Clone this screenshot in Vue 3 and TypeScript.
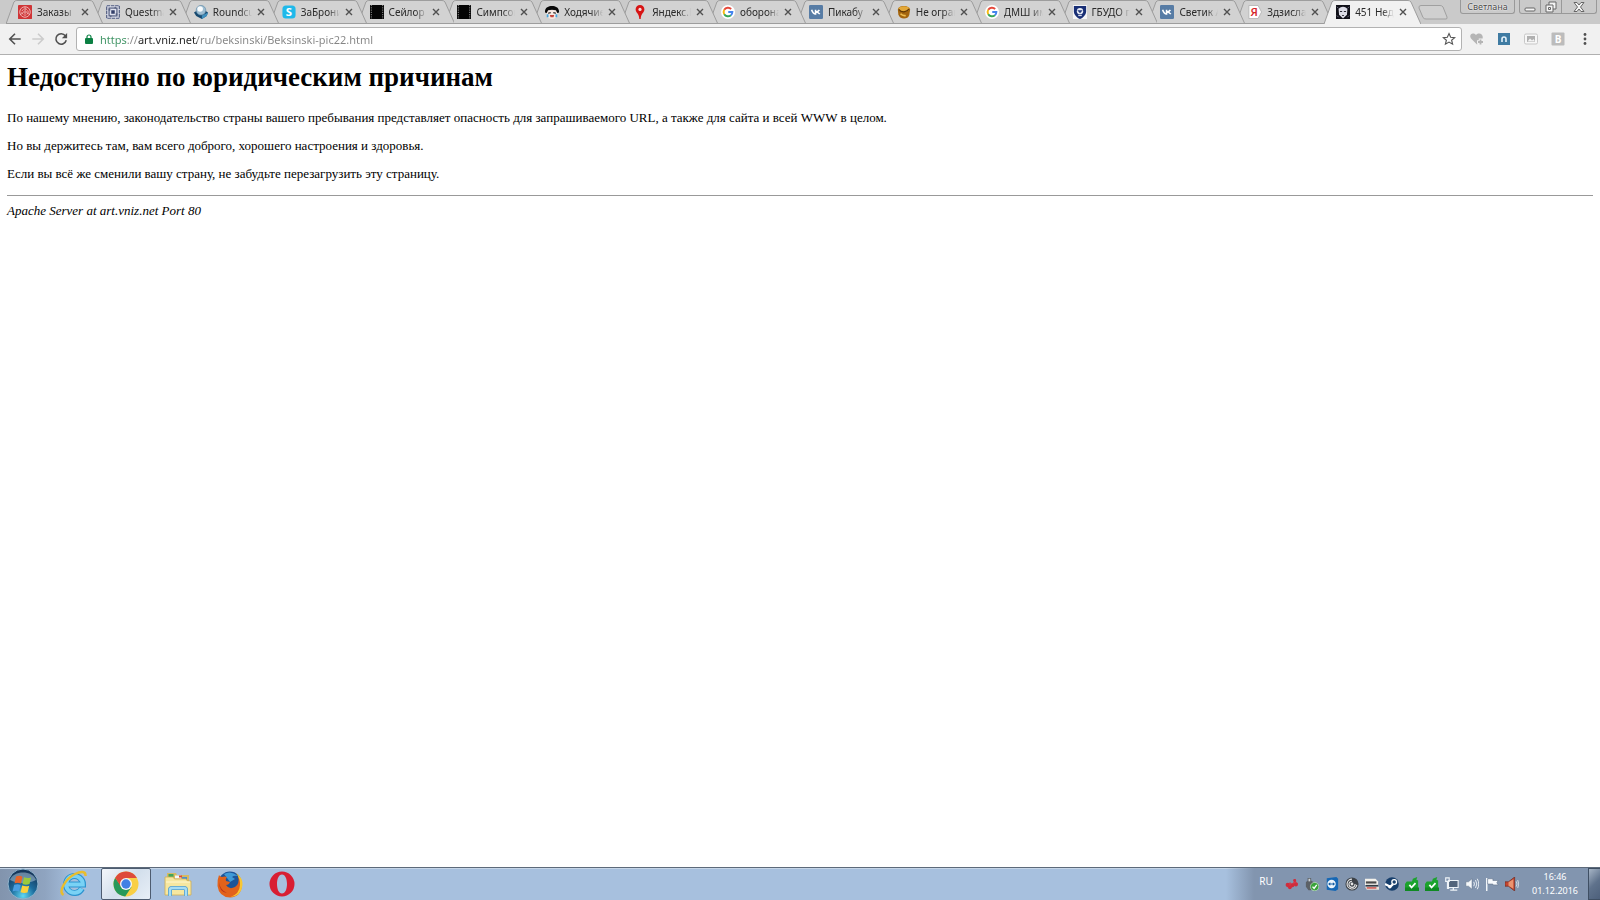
<script setup lang="ts">
import { ref } from 'vue'

interface Tab {
  title: string
  icon: string
}
interface Item {
  label: string
  icon: string
}

const tabs: Tab[] = [
  { title: 'Заказы', icon: 'orders' },
  { title: 'Questmaster', icon: 'maze' },
  { title: 'Roundcube', icon: 'cube' },
  { title: 'ЗаБронируй', icon: 'skype' },
  { title: 'Сейлор', icon: 'film' },
  { title: 'Симпсоны', icon: 'film' },
  { title: 'Ходячие', icon: 'face' },
  { title: 'Яндекс.Карты', icon: 'pin' },
  { title: 'оборона', icon: 'google' },
  { title: 'Пикабу', icon: 'vk' },
  { title: 'Не ограни', icon: 'pot' },
  { title: 'ДМШ им', icon: 'google' },
  { title: 'ГБУДО г', icon: 'shield' },
  { title: 'Светик А', icon: 'vk' },
  { title: 'Здзислав', icon: 'yandex' },
  { title: '451 Недос', icon: 'portrait' },
]
const activeTab = ref(15)
const url = ref('https://art.vniz.net/ru/beksinski/Beksinski-pic22.html')

const glyphs: Record<string, string> = {
  orders:
    '<rect width="16" height="16" rx="1" fill="#cf3436"/><g fill="none" stroke="#f3c0bf"><circle cx="8" cy="8" r="6"/><circle cx="8" cy="8" r="3.6" stroke-dasharray="3 1"/><circle cx="8" cy="8" r="1.4"/><path d="M8 2v4M2.500 11l3.500-2M13.500 11L10 9" stroke-width=".8"/></g>',
  maze:
    '<rect width="16" height="16" fill="#dfe2ee"/><g fill="none" stroke="#4b5578" stroke-width="1.300"><rect x=".8" y=".8" width="14.400" height="14.400" stroke-dasharray="4 .8"/><rect x="3.500" y="3.500" width="9" height="9"/><path d="M3 5.500h2M11 10.500h2M5.500 12v2M10.500 2v2"/></g><rect x="6" y="6" width="4" height="4" fill="#35406a"/>',
  cube:
    '<path d="M0 8.500L4 6h8l4 2.500-1.500 4L9 16l-6.500-3.500z" fill="#16496f"/><path d="M9 16l5.500-3.500L16 8.500 9 12z" fill="#3f8fbe"/><circle cx="8" cy="6" r="5.500" fill="#9dbdd2" stroke="#5a87a5" stroke-width=".7"/><circle cx="7" cy="4.500" r="3.200" fill="#f7fbfd"/>',
  skype:
    '<rect x=".5" y=".5" width="15" height="15" rx="4" fill="#1fb9ea"/><text x="8" y="13" text-anchor="middle" font-family="Open Sans, sans-serif" font-weight="700" font-size="13" fill="#fff">S</text>',
  film:
    '<rect width="16" height="16" fill="#050505"/><path d="M1.500 0v16M14.500 0v16" stroke="#a9a9a9" stroke-width="1" stroke-dasharray="1.300 1.300"/>',
  face:
    '<path d="M2 6h12v5q-1 5-6 5t-6-5z" fill="#f8e9e2"/><path d="M0 8.500C-.5 3 3.500 1 8 1s8.500 2 8 7.500l-2 .5-1.500-3q-4.500-1-9 0L2 9z" fill="#080808"/><path d="M3.500 9.500l3-.8M12.500 9.500l-3-.8" stroke="#222" stroke-width="1.300"/><path d="M5.500 11.500h5l-.8 2.500H6.300z" fill="#c4473d"/><path d="M3 10.500v3.500M13 10.500v3.500" stroke="#42a5de" stroke-width="2"/>',
  pin:
    '<path d="M8 0a5 5 0 0 0-5 5.200C3 8.800 7 9.500 7.200 16h1.600C9 9.500 13 8.800 13 5.200A5 5 0 0 0 8 0z" fill="#d71414"/><circle cx="8" cy="5" r="1.800" fill="#f6dcdc"/>',
  google:
    '<circle cx="8" cy="8" r="8" fill="#fff"/><g fill="none" stroke-width="2.200"><path d="M11.600 4.600A5 5 0 0 0 3.700 5.500" stroke="#e5473a"/><path d="M3.700 5.500a5 5 0 0 0 0 5" stroke="#f5b912"/><path d="M3.700 10.500a5 5 0 0 0 7.600 1.200" stroke="#35a556"/><path d="M11.300 11.700A5 5 0 0 0 13 8H8.300" stroke="#4384ee"/></g>',
  vk:
    '<rect width="16" height="16" rx="1.500" fill="#577ca5"/><path d="M3 5.500c.8 2.500 2 4.800 4.500 4.800V5.500M7.500 8C10 8 11 7 11.800 5.500M8 8c2 0 3.300 1 4.300 2.500" fill="none" stroke="#fff" stroke-width="1.800"/>',
  pot:
    '<path d="M1 5.500c0-3 3-4.500 7-4.500s7 2 7 4.500l-1 6c-1 3-3 4-6 4s-6-2-6.500-5z" fill="#a4650e"/><ellipse cx="8" cy="4.500" rx="6.300" ry="3" fill="#e3a838"/><path d="M2 5c3 4 9 3.500 12-.5" fill="none" stroke="#5f3606" stroke-width="1.400"/><path d="M4 10c2 2 4 2.500 6 2" fill="none" stroke="#efbe52" stroke-width="2"/>',
  shield:
    '<rect width="16" height="16" fill="#f4f4f6"/><path d="M1 1h14v6c0 4-3 7-7 9-4-2-7-5-7-9z" fill="#182f76"/><circle cx="8" cy="7" r="3.600" fill="#e7ebf5"/><path d="M5 6h6L8 9.500z" fill="#263d80"/><path d="M6 12h4" stroke="#d6dcee" stroke-width="1.400"/>',
  yandex:
    '<path d="M1 .5h10.500L15.500 8l-4 7.500H1z" fill="#fff" stroke="#b4b4b4"/><text x="7" y="13" text-anchor="middle" font-family="Open Sans, sans-serif" font-weight="600" font-size="13" fill="#d5242a">Я</text>',
  portrait:
    '<rect width="16" height="16" fill="#101018"/><path d="M3 5c1-4 9-4 10 0l-.5 6L8 15.500 3.500 11z" fill="#dcdce6"/><path d="M4.500 7.500h2.500M9 7.500h2.500M7 12h2" stroke="#2b2b35" stroke-width="1.200"/><path d="M1 2l2 2M15 2l-2 2M1 12l2 2M15 12l-2 2" stroke="#74748a"/>',
  heart:
    '<path d="M8 13.500L2 7.500C-.5 4 3.500.5 7 4c3-3.500 8-.5 6.500 3.500z" fill="#b5b5b5"/><path d="M11.500 7.500v7M8 11h7" stroke="#f2f2f2" stroke-width="3.500"/><path d="M11.500 8.500v5M9 11h5" stroke="#b5b5b5" stroke-width="1.800"/>',
  magnet:
    '<rect x="2" y="2" width="12" height="12" fill="#3f7ba2"/><path d="M6 11V8a2 2 0 0 1 4 0v3" fill="none" stroke="#e4f2fa" stroke-width="1.600"/>',
  image:
    '<rect x="1.500" y="3" width="13" height="10" rx="1.500" fill="#f7f7f7" stroke="#c7c7c7"/><path d="M4 5h8v6H4z" fill="#b0b0b0"/><path d="M4.500 10.500L7 7.500l2 2 1.500-1.500 1.500 2.500z" fill="#f4f4f4"/>',
  boxb:
    '<rect x="1.500" y="1.500" width="13" height="13" rx="1" fill="#bcbcbc"/><text x="8" y="12" text-anchor="middle" font-family="Open Sans, sans-serif" font-weight="700" font-size="10" fill="#fff">B</text>',
  menu:
    '<g fill="#505050"><circle cx="8" cy="3.500" r="1.400"/><circle cx="8" cy="8" r="1.400"/><circle cx="8" cy="12.500" r="1.400"/></g>',
  cherries:
    '<path d="M2 8l4-2 2 2 3-4 1-2 1 4 2 1-3 3-2-1-3 4-4-1z" fill="#d63b4b"/><g fill="#cf2c3c"><circle cx="3" cy="9" r="2.300"/><circle cx="5.500" cy="12" r="2"/><circle cx="8.500" cy="9.500" r="2.300"/><circle cx="12.500" cy="8.500" r="2.300"/><circle cx="11" cy="4" r="1.700"/></g>',
  usb:
    '<path d="M3 1h4v3l3 2v6l-3 3H4L1 11V6l2-2z" fill="#5c6166"/><path d="M4 2h2v3H4z" fill="#cfd4d8"/><circle cx="11" cy="11" r="4.800" fill="#38a239" stroke="#d7efd4" stroke-width=".7"/><path d="M8.600 11l1.800 2 3-4" fill="none" stroke="#fff" stroke-width="1.600"/>',
  team:
    '<path d="M2 1.500L13 0l2 2v12l-3 2-10-1.500z" fill="#1768b5"/><circle cx="7.500" cy="8" r="4.800" fill="#edf5fb"/><path d="M3.500 8L6 6v1.300h3V6l2.500 2L9 10V8.700H6V10z" fill="#155ca1"/>',
  spiral:
    '<circle cx="8" cy="8" r="7.500" fill="#3c4147"/><g fill="none" stroke="#e5e5e5" stroke-width="1.300"><path d="M13.500 9A5.600 5.600 0 1 1 8 2.500"/><path d="M11.500 8A3.500 3.500 0 1 1 8 4.800"/></g><circle cx="8" cy="8" r="1.600" fill="#e5e5e5"/>',
  drive:
    '<path d="M0 2h12l3 3v4H0z" fill="#f4f2ec"/><path d="M1 5h12v2.500H1z" fill="#4a4a4a"/><path d="M1 9h14v2H1z" fill="#343b41"/><path d="M0 11h16v3.500H2z" fill="#e8e1d7"/><path d="M2 12.500h11" stroke="#c83430" stroke-width="1.400"/>',
  steam:
    '<circle cx="8" cy="8" r="7.800" fill="#173f6c"/><circle cx="10.500" cy="5.800" r="2.700" fill="none" stroke="#fff" stroke-width="1.500"/><path d="M0 8l6 3 3-2.500" fill="none" stroke="#fff" stroke-width="2.500"/><circle cx="5.500" cy="11" r="2" fill="#fff"/>',
  green:
    '<path d="M0 8l2-3h6l1-3 5-2-1 3 2 1v10l1 2H0z" fill="#1ba32d"/><path d="M0 12h16v4H0z" fill="#0f8a22"/><path d="M5 9l2.500 3L12 7" fill="none" stroke="#fff" stroke-width="2"/>',
  network:
    '<path d="M4 4h11v8H4z" fill="#52647b" stroke="#eef3f8" stroke-width="1.300"/><path d="M9.500 12v2.500M6 15h8" stroke="#eef3f8" stroke-width="1.500"/><path d="M.8 1h4v4h-4zM2.800 5v8h2" fill="none" stroke="#eef3f8" stroke-width="1.300"/>',
  sound:
    '<path d="M1 5.500h3L8 2v12l-4-3.500H1z" fill="#f5f8fb" stroke="#56677d" stroke-width=".5"/><path d="M10 5.500q1.500 2.500 0 5M12 3.500q3 4.500 0 9M14 2q3.500 6 0 12" fill="none" stroke="#eef3f8" stroke-width="1.100"/>',
  flag:
    '<path d="M2 1v15" stroke="#f7fafd" stroke-width="1.600"/><path d="M3 2h6v2h6l-1.500 2.500L15 9H9V8H3z" fill="#f7fafd" stroke="#5c6e84" stroke-width=".6"/>',
  speaker:
    '<path d="M0 5.500h4L11 0v16l-7-5.500H0z" fill="#c4452f" stroke="#6f2a20" stroke-width=".8"/><path d="M4 6l5.500-3.500v11L4 10z" fill="#ea9470"/><path d="M12.800 5q2 3 0 6M14.500 3.500q2.500 4.500 0 9" fill="none" stroke="#dce4ec" stroke-width="1"/>',
}

const extensions: Item[] = [
  { label: 'Избранное', icon: 'heart' },
  { label: 'Музыка', icon: 'magnet' },
  { label: 'Изображения', icon: 'image' },
  { label: 'Расширение B', icon: 'boxb' },
  { label: 'Меню', icon: 'menu' },
]
const tray: Item[] = [
  { label: 'Вишни', icon: 'cherries' },
  { label: 'Безопасное извлечение', icon: 'usb' },
  { label: 'TeamViewer', icon: 'team' },
  { label: 'Спираль', icon: 'spiral' },
  { label: 'Диск', icon: 'drive' },
  { label: 'Steam', icon: 'steam' },
  { label: 'Монитор 1', icon: 'green' },
  { label: 'Монитор 2', icon: 'green' },
  { label: 'Сеть', icon: 'network' },
  { label: 'Громкость', icon: 'sound' },
  { label: 'Центр поддержки', icon: 'flag' },
  { label: 'Динамик', icon: 'speaker' },
]
</script>

<template>
  <div class="desktop">
    <header class="browser">
      <div class="strip">
        <div class="tabs" role="tablist">
          <div
            v-for="(tab, i) in tabs"
            :key="i"
            class="tab"
            :class="{ active: i === activeTab }"
            :style="{ zIndex: i === activeTab ? 40 : 20 - i }"
          >
            <svg class="shape" viewBox="0 0 98 24" preserveAspectRatio="none" aria-hidden="true">
              <path class="fill" d="M0 24L8 2Q9 0 11 0H85Q87 0 88 2L98 24z" />
              <path class="edge" d="M0 24L8 2Q9 .5 11 .5H85Q87 .5 88 2L98 24" />
              <path v-if="i !== activeTab" class="edge" d="M0 23.500H98" />
            </svg>
            <button class="pick" role="tab" :aria-selected="i === activeTab" @click="activeTab = i">
              <svg class="favicon" viewBox="0 0 16 16" aria-hidden="true" v-html="glyphs[tab.icon]"></svg>
              <span class="title">{{ tab.title }}</span>
            </button>
            <button class="close" aria-label="Закрыть вкладку">
              <svg viewBox="0 0 8 8"><path d="M1 1l6 6M7 1L1 7" /></svg>
            </button>
          </div>
        </div>
        <div class="stripend">
          <button class="newtab" aria-label="Новая вкладка">
            <svg viewBox="0 0 30 15"><path d="M3 .5H22Q24 .5 25 2L29 12Q29.500 14 28 14H8Q6 14 5 12.500L1 3Q.5 .5 3 .5z" /></svg>
          </button>
          <button class="profile">Светлана</button>
          <div class="controls">
            <button aria-label="Свернуть">
              <svg viewBox="0 0 12 12"><rect x="1" y="7" width="10" height="3" rx="1" /></svg>
            </button>
            <button aria-label="Восстановить">
              <svg viewBox="0 0 12 12"><path d="M4 1h7v7H4z" /><path d="M1 4h7v7H1z" /><path d="M3.500 6.500h2v2h-2z" /></svg>
            </button>
            <button class="exit" aria-label="Закрыть">
              <svg viewBox="0 0 12 12"><path d="M1 1.500h3L6 4l2-2.500h3L7.500 6l3.500 4.500H8L6 8l-2 2.500H1L4.500 6z" /></svg>
            </button>
          </div>
        </div>
      </div>

      <div class="toolbar">
        <nav class="nav" aria-label="Навигация">
          <button aria-label="Назад">
            <svg viewBox="0 0 16 16"><path d="M14.500 8H2.500M8 2L2 8l6 6" /></svg>
          </button>
          <button class="dim" aria-label="Вперёд">
            <svg viewBox="0 0 16 16"><path d="M1.500 8h12M8 2l6 6-6 6" /></svg>
          </button>
          <button aria-label="Обновить">
            <svg viewBox="0 0 16 16"><path d="M13 4.300A6 6 0 1 0 14 9.500" /><path class="solid" d="M15 1v6H9z" /></svg>
          </button>
        </nav>
        <div class="omnibox">
          <svg class="lock" viewBox="0 0 8 11" aria-hidden="true">
            <path d="M2 5V3a2 2 0 0 1 4 0v2" fill="none" stroke="#0b8043" stroke-width="1.200" />
            <rect x="0" y="4" width="8" height="6" rx="1" fill="#0b8043" />
          </svg>
          <input v-model="url" class="url" type="text" aria-label="Адрес страницы" spellcheck="false" />
          <button class="star" aria-label="Добавить в закладки">
            <svg viewBox="0 0 16 16"><path d="M8 1.800l1.900 4.200 4.600.4-3.500 3 1.100 4.500L8 11.500l-4.100 2.400L5 9.400l-3.500-3 4.600-.4z" /></svg>
          </button>
        </div>
        <div class="exts">
          <button v-for="e in extensions" :key="e.icon" :aria-label="e.label">
            <svg viewBox="0 0 16 16" v-html="glyphs[e.icon]"></svg>
          </button>
        </div>
      </div>
    </header>

    <main class="page">
      <h1>Недоступно по юридическим причинам</h1>
      <p>По нашему мнению, законодательство страны вашего пребывания представляет опасность для запрашиваемого URL, а также для сайта и всей WWW в целом.</p>
      <p>Но вы держитесь там, вам всего доброго, хорошего настроения и здоровья.</p>
      <p>Если вы всё же сменили вашу страну, не забудьте перезагрузить эту страницу.</p>
      <hr />
      <address>Apache Server at art.vniz.net Port 80</address>
    </main>

    <footer class="taskbar">
      <button class="start" aria-label="Пуск">
        <svg viewBox="0 0 32 32">
          <defs>
            <radialGradient id="orb" cx=".5" cy=".9" r=".8">
              <stop offset="0" stop-color="#5fd7f2" />
              <stop offset=".5" stop-color="#1c6c9d" />
              <stop offset="1" stop-color="#17385c" />
            </radialGradient>
          </defs>
          <circle cx="16" cy="16" r="15" fill="url(#orb)" stroke="#8fb3cc" />
          <path d="M3 12C6 2 26 2 29 12 22 16 10 16 3 12z" fill="#c9dce9" opacity=".45" />
          <path d="M9 8.500q3.500-1.500 6.500.3L14 15.500q-3-1.500-6.500-.2z" fill="#e8642a" />
          <path d="M17 9.300q3.500 1.500 7 .2L22.500 16q-3.500 1.300-7 0z" fill="#9aca3c" />
          <path d="M7.200 16.800q3.500-1.300 6.500.2L12 23.500q-3-1.500-6.500 0z" fill="#4a9ee0" />
          <path d="M15.200 17.600q3.500 1.300 7 .2L20.500 24.500q-3.500 1-7-.3z" fill="#fbd13b" />
        </svg>
      </button>
      <div class="apps">
        <button aria-label="Internet Explorer">
          <svg viewBox="0 0 28 28">
            <path d="M22 18.500A8.500 8.500 0 1 1 23 14.500H8" fill="none" stroke="#2b93cf" stroke-width="6" />
            <path d="M21.700 18.500A8.400 8.400 0 1 1 22.800 14.500H8" fill="none" stroke="#79d2f5" stroke-width="4" />
            <path d="M3.500 25C-2 22 5 9 15 4 21 1 26 1 25.500 6" fill="none" stroke="#e9bd2c" stroke-width="2.400" />
          </svg>
        </button>
        <button class="current" aria-label="Google Chrome">
          <svg viewBox="0 0 28 28">
            <circle cx="14" cy="14" r="12.500" fill="#f9cf45" />
            <path d="M3.200 7.700A12.500 12.500 0 0 0 13.200 26.500L19.500 17 14 14 9 16z" fill="#27995a" />
            <path d="M3.200 7.700l5.800 9 5-2V8h10.900A12.500 12.500 0 0 0 3.200 7.700z" fill="#de4b3b" />
            <circle cx="14" cy="14" r="6" fill="#f6f7f8" />
            <circle cx="14" cy="14" r="4.700" fill="#4280e4" />
          </svg>
        </button>
        <button aria-label="Проводник">
          <svg viewBox="0 0 28 28">
            <path d="M3 3h9l1 2h12v15H3z" fill="#d6b961" />
            <path d="M4.500 4h5v3h-5z" fill="#3fa65b" /><path d="M11 5.500h6v3h-6z" fill="#f4f6f8" /><path d="M18 7h5v3h-5z" fill="#4b8fd0" /><path d="M15 5.500h3v2h-3z" fill="#d8463c" />
            <path d="M1 7h8l1.500 2H22l1.500 2H27v14H1z" fill="#f6e7a0" stroke="#cfae55" stroke-width=".8" />
            <path d="M2 12h24" stroke="#fff7cf" />
            <path d="M6 26v-6q0-2 2-2h12q2 0 2 2v6" fill="none" stroke="#569fc9" stroke-width="4" />
            <path d="M6 26v-6q0-2 2-2h12q2 0 2 2v6" fill="none" stroke="#a5dcf5" stroke-width="2.400" />
          </svg>
        </button>
        <button aria-label="Firefox">
          <svg viewBox="0 0 28 28">
            <circle cx="14" cy="13" r="11.500" fill="#1d5499" />
            <path d="M8 4q7-4 14 2-4-1-6 1l3 2-5 3z" fill="#3f9ad7" />
            <path d="M3 5q1 2 3 2 3-1 5 0-2 2-1 4l4 1q-1 3-4 3 3 5 9 2 5-3 3-11 4 4 4 9-1 12-12 12.500Q3 27 1.500 16 1 10 3 5z" fill="#e2621b" />
            <path d="M20 3q7 5 6.500 12-1 11-12 12 9-3 9.500-12 .5-6-4-12z" fill="#f8c733" />
            <path d="M3 12q1 8 8 11-8-1-8-11z" fill="#b5331c" />
          </svg>
        </button>
        <button aria-label="Opera">
          <svg viewBox="0 0 28 28">
            <path fill-rule="evenodd" d="M14 1.500A12.500 12.500 0 1 0 14 26.500 12.500 12.500 0 1 0 14 1.500zM14 4.500c3.300 0 5 4.500 5 9.500s-1.700 9.500-5 9.500S9 19 9 14s1.700-9.500 5-9.500z" fill="#d81e33" />
          </svg>
        </button>
      </div>
      <div class="tray">
        <button class="lang">RU</button>
        <div class="trayicons">
          <button v-for="t in tray" :key="t.label" :aria-label="t.label">
            <svg viewBox="0 0 16 16" v-html="glyphs[t.icon]"></svg>
          </button>
        </div>
        <button class="clock"><time>16:46</time><span>01.12.2016</span></button>
        <button class="peek" aria-label="Свернуть все окна"></button>
      </div>
    </footer>
  </div>
</template>

<style>
html,
body {
  margin: 0;
  background: #fff;
}
</style>

<style scoped>
.desktop {
  display: flex;
  flex-direction: column;
  min-height: 100vh;
  font-family: 'Noto Sans', 'Open Sans', sans-serif;
}
button {
  margin: 0;
  padding: 0;
  border: 0;
  background: none;
  font: inherit;
  color: inherit;
  display: flex;
  align-items: center;
  justify-content: center;
}
svg {
  display: block;
  flex: none;
}
.strip {
  display: flex;
  height: 24px;
  padding-left: 6px;
  background: #cacaca;
}
.tabs {
  display: flex;
  flex: 1;
  min-width: 0;
}
.tab {
  position: relative;
  display: flex;
  flex: 1 1 0;
  min-width: 0;
  align-items: center;
}
.shape {
  position: absolute;
  top: 0;
  left: 0;
  width: calc(100% + 9px);
  height: 24px;
}
.fill {
  fill: #d2d2d2;
}
.edge {
  fill: none;
  stroke: #9c9c9c;
  stroke-width: 1;
}
.active .fill {
  fill: #f1f1f1;
}
.pick {
  position: relative;
  flex: 1;
  min-width: 0;
  height: 24px;
  padding-left: 12px;
  gap: 5px;
  justify-content: flex-start;
}
.favicon {
  width: 14px;
  height: 14px;
}
.title {
  flex: 1;
  min-width: 0;
  overflow: hidden;
  white-space: nowrap;
  text-align: left;
  font-size: 10px;
  line-height: 16px;
  color: #2a2a2a;
  mask-image: linear-gradient(to right, #000 calc(100% - 12px), transparent);
}
.close {
  position: relative;
  width: 8px;
  height: 24px;
  margin: 0 5px;
}
.close svg {
  width: 8px;
  height: 8px;
}
.close path {
  stroke: #505050;
  stroke-width: 1.4;
}
.stripend {
  display: flex;
  flex: none;
  align-items: flex-start;
  padding: 0 3px 0 6px;
}
.newtab {
  width: 30px;
  height: 24px;
}
.newtab svg {
  width: 30px;
  height: 15px;
}
.newtab path {
  fill: #d0d0d0;
  stroke: #a0a0a0;
}
.profile {
  width: 55px;
  height: 14px;
  margin: 0 4px 0 12px;
  border: 1px solid #999;
  border-top: 0;
  border-radius: 0 0 3px 3px;
  font-size: 9px;
  line-height: 12px;
  color: #4a4a4a;
  text-shadow: 0 0 1px #fff, 0 0 2px #fff;
}
.controls {
  display: flex;
  height: 14px;
  border: 1px solid #999;
  border-top: 0;
  border-radius: 0 0 3px 3px;
  box-sizing: border-box;
}
.controls button {
  width: 21px;
  border-right: 1px solid #999;
}
.controls .exit {
  width: 34px;
  border-right: 0;
}
.controls svg {
  width: 12px;
  height: 12px;
}
.controls svg * {
  fill: #f4f4f4;
  stroke: #666;
}
.toolbar {
  display: flex;
  align-items: center;
  height: 30px;
  background: #f1f1f1;
  border-bottom: 1px solid #b0b0b0;
}
.nav {
  display: flex;
  gap: 9px;
  padding: 0 8px;
}
.nav button {
  width: 14px;
  height: 24px;
}
.nav svg {
  width: 14px;
  height: 14px;
}
.nav path {
  fill: none;
  stroke: #505050;
  stroke-width: 1.8;
}
.nav .dim path {
  stroke: #ccc;
}
.nav .solid {
  fill: #505050;
  stroke: none;
}
.omnibox {
  display: flex;
  flex: 1;
  align-items: center;
  height: 22px;
  padding: 0 5px 0 8px;
  border: 1px solid #b2b2b2;
  border-radius: 3px;
  background: #fff;
}
.lock {
  width: 8px;
  height: 11px;
}
.url {
  flex: 1;
  min-width: 0;
  height: 20px;
  margin: 0 0 0 7px;
  padding: 0;
  border: 0;
  outline: 0;
  font-family: 'Noto Sans', 'Open Sans', sans-serif;
  font-size: 11px;
  color: transparent;
  caret-color: #333;
  background: linear-gradient(to right, #3c9262 27px, #8a8a8a 27px 38px, #222 38px 97px, #858585 97px);
  background-clip: text;
}
.star {
  width: 14px;
}
.star svg {
  width: 14px;
  height: 14px;
}
.star path {
  fill: none;
  stroke: #555;
  stroke-width: 1.3;
}
.exts {
  display: flex;
  gap: 11px;
  padding: 0 7px;
}
.exts svg {
  width: 16px;
  height: 16px;
}
.page {
  flex: 1;
  padding: 7px;
  background: #fff;
  color: #000;
  font-family: 'Liberation Serif', 'Times New Roman', serif;
  font-size: 13px;
  line-height: 15px;
}
h1 {
  margin: 0 0 18px;
  font-size: 27px;
  line-height: 30px;
}
p {
  margin: 0 0 13px;
}
hr {
  margin: 14px 0 7px;
  border: 0;
  border-top: 1px solid #999;
}
.taskbar {
  display: flex;
  height: 32px;
  border-top: 1px solid #5d6a7a;
  background: linear-gradient(to right, #8294ad, #8fa4c0 45px, #a7c0de 75px, #a7c0de);
  box-shadow: inset 0 1px #c5d5e8;
}
.start {
  width: 45px;
}
.start svg {
  width: 32px;
  height: 32px;
}
.apps {
  display: flex;
  flex: 1;
  gap: 2px;
  padding-left: 4px;
}
.apps button {
  width: 50px;
}
.apps svg {
  width: 28px;
  height: 28px;
}
.apps .current {
  box-sizing: border-box;
  border: 1px solid #4d5c70;
  border-radius: 2px;
  background: linear-gradient(135deg, #f2f6fa, #d3dfec 50%, #e8eff7);
}
.tray {
  display: flex;
  flex: none;
  padding-left: 30px;
  background: linear-gradient(to right, transparent, #8295af 28px);
}
.lang {
  width: 20px;
  height: 26px;
  margin-right: 9px;
  font-size: 10px;
  color: #fff;
}
.trayicons {
  display: flex;
  gap: 6px;
}
.trayicons svg {
  width: 14px;
  height: 14px;
}
.clock {
  flex-direction: column;
  width: 58px;
  margin-left: 7px;
  margin-right: 4px;
  font-size: 9px;
  line-height: 14px;
  color: #fff;
}
.peek {
  width: 12px;
  border: 1px solid #3f4f63;
  border-right: 0;
  background: linear-gradient(135deg, #a7b5c6, #5f728c 50%, #4d607b);
}
</style>
